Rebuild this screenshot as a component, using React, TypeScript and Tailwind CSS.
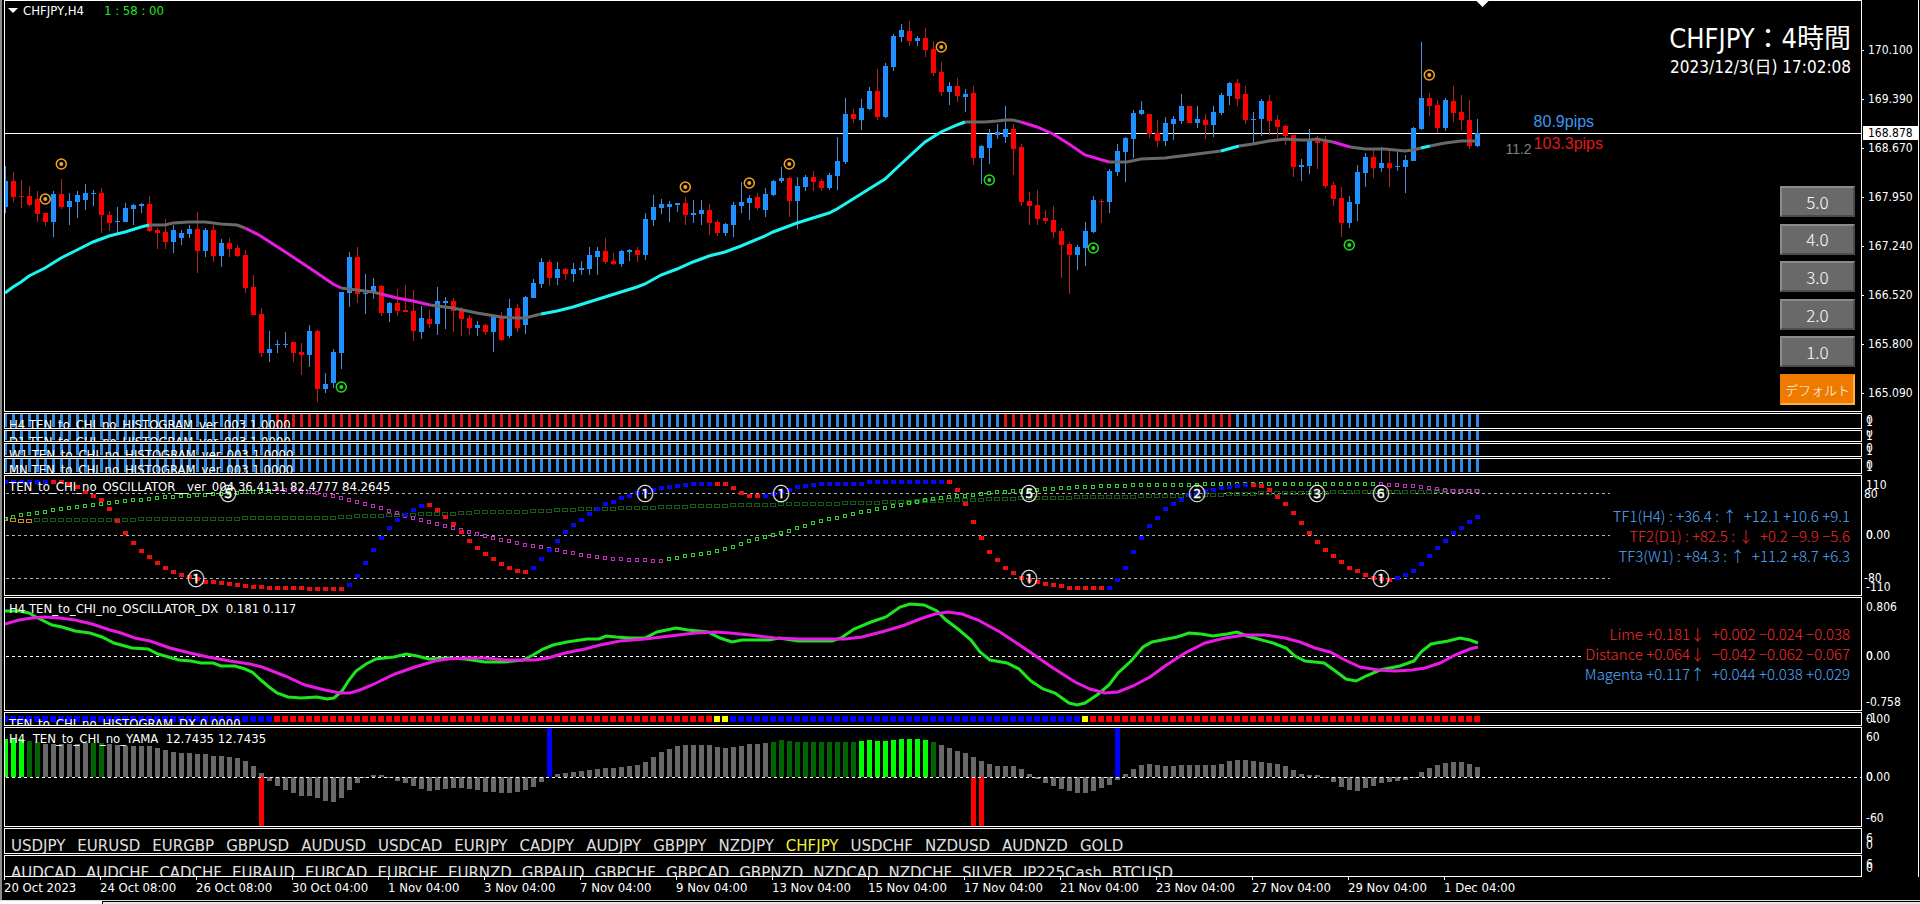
import { useState } from "react";
import type { ReactNode } from "react";

// distance between two bars
const STEP = 8;
const BARS = 185;

const BLUE = "#1e90ff";
const RED = "#ff0000";
const GRAY = "#696969";

// [direction, high, body top, body bottom, low]
type Candle = ["u" | "d", number, number, number, number];

const candles: Candle[] = [
  ["u", 166, 181, 207, 213], ["d", 172, 181, 197, 202], ["d", 180, 196, 197, 208], ["d", 186, 196, 205, 206],
  ["d", 191, 199, 214, 222], ["d", 213, 213, 222, 226], ["u", 191, 194, 222, 237], ["d", 179, 194, 207, 209],
  ["u", 193, 201, 207, 225], ["u", 191, 195, 202, 218], ["u", 184, 193, 200, 210], ["u", 190, 193, 194, 206],
  ["d", 188, 193, 215, 233], ["d", 211, 215, 223, 231], ["u", 207, 221, 222, 233], ["u", 203, 208, 222, 222],
  ["u", 204, 205, 209, 225], ["u", 203, 204, 206, 213], ["d", 196, 204, 231, 232], ["d", 228, 230, 233, 249],
  ["d", 219, 232, 242, 249], ["u", 225, 230, 242, 253], ["u", 230, 233, 238, 245], ["u", 225, 229, 234, 238],
  ["d", 212, 229, 251, 273], ["u", 228, 230, 251, 257], ["d", 225, 230, 256, 262], ["u", 239, 243, 256, 267],
  ["d", 238, 243, 249, 257], ["d", 245, 248, 256, 257], ["d", 250, 255, 288, 293], ["d", 275, 287, 315, 315],
  ["d", 308, 314, 353, 357], ["u", 331, 349, 353, 362], ["u", 340, 344, 345, 353], ["u", 332, 344, 345, 348],
  ["d", 342, 342, 353, 362], ["d", 343, 352, 355, 375], ["u", 325, 331, 355, 367], ["d", 330, 331, 389, 402],
  ["u", 373, 384, 389, 393], ["u", 349, 352, 383, 388], ["u", 292, 292, 353, 369], ["u", 252, 257, 293, 307],
  ["d", 247, 257, 294, 303], ["u", 274, 293, 294, 314], ["u", 278, 286, 292, 299], ["d", 285, 286, 313, 316],
  ["u", 302, 303, 313, 322], ["d", 289, 303, 311, 316], ["d", 285, 310, 312, 312], ["d", 290, 311, 331, 341],
  ["u", 306, 318, 332, 339], ["d", 310, 319, 324, 328], ["u", 287, 301, 324, 335], ["u", 297, 301, 303, 329],
  ["d", 298, 301, 311, 332], ["d", 307, 311, 319, 336], ["d", 315, 318, 328, 335], ["u", 321, 325, 328, 336],
  ["d", 324, 325, 332, 335], ["u", 315, 317, 332, 352], ["d", 312, 318, 340, 341], ["u", 299, 308, 336, 338],
  ["d", 304, 308, 328, 332], ["u", 296, 297, 325, 334], ["u", 279, 283, 298, 298], ["u", 258, 262, 284, 288],
  ["d", 260, 262, 278, 286], ["u", 262, 269, 278, 285], ["d", 268, 269, 274, 280], ["u", 263, 269, 274, 282],
  ["u", 261, 268, 270, 275], ["u", 247, 255, 269, 275], ["u", 247, 251, 257, 275], ["d", 238, 251, 262, 264],
  ["d", 253, 261, 264, 265], ["u", 250, 251, 264, 267], ["u", 249, 250, 252, 261], ["d", 247, 250, 255, 262],
  ["u", 213, 219, 255, 260], ["u", 195, 207, 220, 226], ["u", 199, 204, 208, 214], ["u", 201, 204, 207, 222],
  ["u", 203, 203, 205, 212], ["d", 197, 203, 215, 225], ["u", 200, 213, 215, 223], ["u", 200, 210, 214, 225],
  ["d", 204, 210, 223, 235], ["d", 220, 222, 233, 236], ["u", 223, 224, 233, 236], ["u", 202, 205, 225, 237],
  ["u", 182, 202, 206, 213], ["u", 195, 198, 203, 220], ["d", 193, 197, 208, 210], ["u", 188, 194, 210, 217],
  ["u", 180, 181, 195, 196], ["u", 167, 178, 181, 183], ["d", 177, 178, 201, 217], ["u", 177, 186, 201, 229],
  ["u", 175, 177, 187, 191], ["d", 171, 177, 182, 191], ["d", 179, 181, 188, 191], ["u", 173, 175, 188, 190],
  ["u", 137, 161, 176, 190], ["u", 98, 114, 162, 164], ["d", 109, 114, 119, 123], ["u", 99, 108, 120, 130],
  ["u", 87, 91, 109, 110], ["d", 69, 91, 117, 120], ["u", 63, 66, 117, 118], ["u", 34, 36, 67, 71],
  ["u", 24, 30, 37, 42], ["d", 21, 31, 41, 46], ["u", 36, 38, 41, 46], ["d", 28, 38, 50, 57],
  ["d", 41, 49, 73, 76], ["d", 62, 72, 92, 96], ["u", 82, 86, 92, 105], ["d", 78, 86, 96, 102],
  ["u", 89, 94, 97, 112], ["d", 86, 93, 158, 165], ["u", 145, 146, 158, 184], ["u", 129, 134, 148, 164],
  ["u", 124, 132, 135, 139], ["u", 106, 129, 137, 143], ["d", 124, 129, 149, 175], ["d", 144, 147, 202, 206],
  ["d", 192, 201, 206, 225], ["d", 190, 205, 219, 225], ["d", 210, 218, 221, 224], ["d", 206, 220, 232, 238],
  ["d", 228, 231, 245, 278], ["d", 242, 244, 255, 294], ["u", 245, 247, 255, 270], ["u", 222, 231, 248, 266],
  ["u", 196, 200, 232, 233], ["d", 199, 201, 202, 223], ["u", 169, 171, 202, 213], ["u", 144, 151, 172, 176],
  ["u", 137, 138, 152, 182], ["u", 110, 113, 139, 158], ["u", 101, 110, 114, 115], ["d", 114, 114, 134, 138],
  ["d", 120, 133, 141, 147], ["u", 117, 123, 141, 146], ["u", 116, 119, 124, 140], ["u", 94, 106, 121, 124],
  ["d", 106, 106, 123, 123], ["u", 106, 119, 123, 128], ["d", 114, 120, 125, 139], ["u", 106, 112, 125, 137],
  ["u", 93, 95, 113, 115], ["u", 82, 83, 96, 105], ["d", 79, 83, 99, 106], ["d", 86, 94, 120, 124],
  ["u", 112, 119, 120, 144], ["u", 99, 101, 119, 136], ["d", 95, 101, 121, 135], ["d", 115, 120, 127, 138],
  ["d", 125, 126, 136, 145], ["d", 135, 135, 167, 177], ["u", 159, 165, 167, 181], ["u", 129, 141, 166, 174],
  ["d", 136, 141, 143, 169], ["d", 136, 142, 186, 188], ["d", 182, 185, 199, 206], ["d", 187, 198, 223, 237],
  ["u", 196, 202, 223, 228], ["u", 165, 172, 204, 221], ["u", 153, 157, 173, 187], ["d", 150, 157, 168, 178],
  ["u", 147, 163, 168, 172], ["d", 151, 163, 168, 187], ["u", 152, 166, 167, 171], ["u", 155, 160, 167, 193],
  ["u", 127, 128, 161, 161], ["u", 42, 98, 129, 130], ["d", 93, 98, 106, 116], ["d", 100, 105, 128, 133],
  ["u", 98, 100, 128, 131], ["d", 86, 101, 113, 122], ["d", 95, 112, 120, 130], ["d", 100, 120, 146, 149],
  ["u", 119, 133, 146, 147],
];

const CYAN = "#1cf6f2";
const PINK = "#e81ae4";

const maSegments = [
  { color: CYAN, points: "5,293 13,287 21,282 29,276 45,268 61,258 77,250 93,242 109,236 125,232 141,227 149,225" },
  { color: GRAY, points: "149,225 165,225 173,223 189,222 205,222 221,224 237,225 245,228" },
  { color: PINK, points: "245,228 259,235 273,244 293,257 317,273 333,284 341,288" },
  { color: GRAY, points: "341,288 357,290 373,292 381,294" },
  { color: PINK, points: "381,294 397,298 413,301 430,305" },
  { color: GRAY, points: "430,305 453,308 477,313 501,317 517,318 525,318 541,314" },
  {
    color: CYAN,
    points:
      "541,314 557,311 573,307 589,302 605,297 621,292 637,287 645,284 661,275 677,269 693,262 709,256 725,252 741,246 765,236 773,232 797,223 813,218 829,213 837,209 853,199 877,184 885,179 901,164 925,142 941,132 957,125 965,122",
  },
  { color: GRAY, points: "965,122 985,122 997,121 1005,120 1013,120 1021,122" },
  { color: PINK, points: "1021,122 1037,127 1053,134 1069,144 1085,155 1109,162" },
  { color: GRAY, points: "1109,162 1127,162 1141,159 1165,158 1197,154 1221,151" },
  { color: CYAN, points: "1221,151 1239,146" },
  { color: GRAY, points: "1239,146 1253,144 1269,141 1285,139 1301,140 1309,140 1317,139 1333,142" },
  { color: PINK, points: "1333,142 1350,147" },
  { color: GRAY, points: "1350,147 1365,149 1385,149 1405,151 1413,150 1421,148" },
  { color: CYAN, points: "1421,148 1430,146" },
  { color: GRAY, points: "1430,146 1445,143 1461,141 1477,141" },
];

const signals = [
  { x: 45, y: 199, color: "#f5a31f" },
  { x: 61, y: 164, color: "#f5a31f" },
  { x: 341, y: 387, color: "#22dd22" },
  { x: 685, y: 187, color: "#f5a31f" },
  { x: 749, y: 183, color: "#f5a31f" },
  { x: 789, y: 164, color: "#f5a31f" },
  { x: 941, y: 47, color: "#f5a31f" },
  { x: 989, y: 180, color: "#22dd22" },
  { x: 1093, y: 248, color: "#22dd22" },
  { x: 1349, y: 245, color: "#22dd22" },
  { x: 1429, y: 75, color: "#f5a31f" },
];

const prices = ["170.100", "169.390", "168.670", "167.950", "167.240", "166.520", "165.800", "165.090"];

// short time frame, one value for each bar
const tf1 = [
  482, 482, 482, 482, 482, 482, 482, 482, 484, 487, 492, 496, 500, 509, 521, 533, 543, 551, 557, 563, 568, 572, 575,
  577, 579, 582, 582, 583, 584, 585, 586, 587, 587, 588, 588, 588, 588, 588, 589, 589, 589, 589, 589, 585, 576, 563,
  550, 538, 528, 520, 515, 510, 506, 505, 510, 517, 524, 532, 541, 548, 554, 559, 564, 568, 571, 572, 568, 559, 550,
  541, 532, 525, 520, 514, 509, 504, 502, 498, 496, 493, 492, 490, 488, 487, 486, 485, 484, 484, 484, 484, 484, 488,
  493, 496, 496, 496, 494, 492, 490, 487, 486, 485, 484, 484, 484, 484, 484, 484, 482, 482, 482, 482, 482, 482, 482,
  482, 482, 482, 482, 490, 504, 522, 538, 552, 560, 568, 573, 578, 580, 582, 584, 585, 586, 588, 588, 588, 588, 588,
  588, 580, 568, 552, 538, 526, 518, 509, 504, 500, 495, 493, 491, 490, 488, 487, 486, 485, 485, 486, 490, 497, 504,
  513, 523, 533, 542, 550, 556, 562, 568, 571, 575, 578, 579, 580, 578, 575, 571, 564, 556, 548, 541, 533, 528, 522,
  517,
];
const tf1Falling = [[6, 42], [53, 65], [89, 94], [118, 137], [156, 173]];

// slower time frames are given as [bar, value] and filled in between
const tf2 = [
  [0, 519], [1, 517], [2, 515], [4, 513], [6, 510], [8, 508], [10, 506], [12, 504], [14, 502], [16, 500], [18, 499],
  [20, 497], [22, 496], [24, 495], [26, 494], [28, 493], [30, 492], [33, 491], [34, 489], [36, 490], [38, 492],
  [41, 496], [43, 500], [45, 504], [47, 508], [49, 513], [51, 518], [53, 522], [55, 526], [57, 530], [59, 534],
  [61, 538], [63, 541], [65, 545], [67, 547], [69, 550], [71, 553], [73, 556], [75, 558], [77, 559], [79, 560],
  [82, 561], [83, 559], [85, 556], [87, 554], [89, 551], [91, 547], [93, 541], [95, 537], [97, 533], [99, 528],
  [101, 523], [103, 519], [105, 516], [107, 512], [109, 509], [111, 506], [113, 503], [115, 500], [117, 498],
  [119, 496], [121, 495], [124, 492], [126, 491], [128, 490], [130, 489], [132, 488], [134, 487], [138, 486],
  [142, 485], [148, 485], [150, 484], [172, 484], [174, 485], [176, 486], [178, 488], [180, 490], [182, 491],
  [184, 491],
];
const tf2Falling = [[34, 82], [172, 184]];

const tf3 = [
  [0, 519], [1, 520], [3, 521], [4, 520], [16, 520], [17, 519], [29, 519], [30, 518], [41, 518], [44, 516],
  [50, 515], [52, 514], [55, 514], [59, 512], [64, 512], [70, 510], [72, 509], [80, 508], [87, 506], [100, 504],
  [108, 503], [115, 501], [120, 500], [124, 499], [128, 498], [138, 497], [144, 496], [150, 495], [158, 493],
  [172, 492], [184, 491],
];

const marks = [
  { x: 228, y: 493, text: "⑤" },
  { x: 196, y: 578, text: "①" },
  { x: 645, y: 493, text: "①" },
  { x: 781, y: 493, text: "①" },
  { x: 1029, y: 493, text: "⑤" },
  { x: 1029, y: 578, text: "①" },
  { x: 1197, y: 493, text: "②" },
  { x: 1317, y: 493, text: "③" },
  { x: 1381, y: 493, text: "⑥" },
  { x: 1381, y: 578, text: "①" },
];

const dxLime =
  "5,611 19,611 29,613 36,617 52,625 62,627 75,631 90,633 102,637 114,643 132,648 148,649 158,654 179,660 191,661 201,663 213,663 221,666 235,666 245,669 252,672 262,681 269,687 277,693 288,697 301,698 317,697 327,699 334,698 342,691 349,680 356,671 366,664 376,659 394,657 406,654 417,656 429,659 448,658 465,659 485,662 504,662 523,660 533,655 543,649 553,645 567,642 587,639 599,639 606,636 616,637 630,638 645,638 657,632 676,628 688,630 708,632 720,638 732,642 742,640 769,640 779,638 798,641 832,641 841,638 854,629 871,622 886,617 900,607 910,604 924,605 937,611 946,620 958,629 971,640 980,652 990,660 1007,663 1019,669 1031,681 1043,689 1055,693 1069,703 1077,705 1085,703 1097,695 1109,685 1118,673 1131,661 1143,647 1152,642 1177,637 1189,633 1201,634 1213,636 1227,634 1237,632 1247,636 1273,643 1286,648 1295,656 1305,661 1324,663 1334,670 1346,679 1356,681 1366,676 1380,670 1400,666 1414,661 1421,652 1431,644 1448,641 1460,638 1470,640 1478,643";
const dxPink =
  "5,624 19,620 32,618 45,617 60,618 75,620 92,624 110,630 121,633 135,638 150,641 170,648 190,653 208,657 230,661 250,664 262,667 285,676 305,685 325,690 340,693 350,693 360,690 372,685 395,674 415,667 435,661 448,659 465,658 485,658 505,660 535,660 548,658 565,653 585,649 600,645 620,641 645,639 670,636 695,633 715,632 730,633 750,635 775,638 800,639 845,639 862,637 885,631 905,625 920,619 935,614 948,612 962,614 978,620 1000,632 1030,652 1050,666 1075,682 1090,689 1105,693 1118,692 1133,686 1150,677 1165,666 1185,653 1205,643 1225,638 1245,635 1265,635 1285,638 1300,642 1315,648 1330,652 1345,660 1360,667 1378,670 1395,671 1412,670 1425,668 1440,663 1455,655 1470,649 1478,647";

const yama = [
  739, 739, 739, 741, 742, 744, 744, 744, 744, 744, 743, 743, 743, 744, 745, 746, 746, 746, 746, 748, 750, 752, 753,
  753, 754, 754, 756, 756, 757, 758, 761, 766, 773, 781, 786, 790, 793, 796, 796, 798, 801, 802, 798, 790, 783, 778,
  775, 775, 778, 781, 783, 786, 789, 791, 790, 789, 788, 788, 789, 790, 792, 792, 793, 793, 792, 790, 787, 782, 777,
  774, 773, 772, 771, 770, 769, 768, 768, 767, 766, 765, 762, 757, 752, 749, 746, 745, 745, 745, 745, 747, 748, 747,
  746, 744, 744, 743, 742, 740, 741, 742, 742, 742, 742, 742, 742, 742, 742, 741, 740, 741, 741, 740, 739, 739, 739,
  740, 742, 745, 748, 751, 753, 757, 761, 764, 766, 766, 766, 769, 774, 779, 783, 786, 789, 791, 793, 793, 791, 788,
  785, 780, 774, 769, 765, 764, 765, 766, 766, 765, 765, 765, 765, 765, 764, 761, 760, 760, 761, 762, 763, 764, 766,
  770, 774, 775, 775, 778, 782, 787, 790, 791, 788, 786, 783, 782, 781, 780, 778, 772, 768, 765, 763, 762, 762, 764,
  767,
];
const yamaLime = [[0, 2], [107, 115]];
const yamaGreen = [[3, 4], [11, 12], [96, 106], [116, 116]];
const yamaUp = [68, 139];
const yamaDown = [32, 121, 122];

const symbols = [
  "USDJPY", "EURUSD", "EURGBP", "GBPUSD", "AUDUSD", "USDCAD", "EURJPY", "CADJPY",
  "AUDJPY", "GBPJPY", "NZDJPY", "CHFJPY", "USDCHF", "NZDUSD", "AUDNZD", "GOLD",
];
const moreSymbols = [
  "AUDCAD", "AUDCHF", "CADCHF", "EURAUD", "EURCAD", "EURCHF", "EURNZD", "GBPAUD",
  "GBPCHF", "GBPCAD", "GBPNZD", "NZDCAD", "NZDCHF", "SILVER", "JP225Cash", "BTCUSD",
];

const times = [
  "20 Oct 2023", "24 Oct 08:00", "26 Oct 08:00", "30 Oct 04:00", "1 Nov 04:00", "3 Nov 04:00", "7 Nov 04:00",
  "9 Nov 04:00", "13 Nov 04:00", "15 Nov 04:00", "17 Nov 04:00", "21 Nov 04:00", "23 Nov 04:00", "27 Nov 04:00",
  "29 Nov 04:00", "1 Dec 04:00",
];

const within = (ranges: number[][], i: number) => ranges.some(([from, to]) => i >= from && i <= to);

function fill(points: number[][]) {
  const result: number[] = [];
  for (let k = 0; k < points.length - 1; k++) {
    const [i0, y0] = points[k];
    const [i1, y1] = points[k + 1];
    for (let i = i0; i < i1; i++) {
      result.push(Math.round(y0 + ((y1 - y0) * (i - i0)) / (i1 - i0)));
    }
  }
  result.push(points[points.length - 1][1]);
  return result;
}

const barIndexes = Array.from({ length: BARS }, (_, i) => i);

interface AxisLabel {
  y: number;
  text: string;
  x?: number;
}

interface PanelProps {
  // y of the first pixel row inside the frame, the drawings use chart coordinates
  top: number;
  className: string;
  title?: string;
  labels?: AxisLabel[];
  drawing?: ReactNode;
  children?: ReactNode;
}

const Panel = ({ top, className, title, labels = [], drawing, children }: PanelProps) => {
  return (
    <section className={`flex ${className}`}>
      <div className="relative flex-1 overflow-hidden border border-white">
        {drawing && (
          <svg className="absolute inset-0 h-full w-full" shapeRendering="crispEdges">
            <g transform={`translate(-5 ${-top})`}>{drawing}</g>
          </svg>
        )}
        {title && <h2 className="absolute top-[3px] left-1 text-[13px] leading-4 whitespace-pre">{title}</h2>}
        {children}
      </div>
      <svg className="h-full w-[56px] text-xs" fill="white">
        <g transform={`translate(0 ${1 - top})`}>
          {labels.map((label) => (
            <text key={label.text + label.y} x={label.x ?? 4} y={label.y + 4}>
              {label.text}
            </text>
          ))}
        </g>
      </svg>
    </section>
  );
};

const Level = ({ y, to, color }: { y: number; to: number; color: string }) => (
  <line x1={6} x2={to} y1={y + 0.5} y2={y + 0.5} stroke={color} strokeDasharray="3 3" />
);

const Bars = ({ y, height, red = [] }: { y: number; height: number; red?: number[][] }) => (
  <>
    {barIndexes.map((i) => (
      <rect
        key={i}
        x={4 + i * STEP}
        y={y}
        width={3}
        height={height}
        fill={within(red, i) ? "#dd1414" : "#2e8ce6"}
      />
    ))}
  </>
);

const Candles = () => (
  <>
    {candles.map(([dir, high, top, bottom, low], i) => {
      const x = 5 + i * STEP;
      return (
        <g key={i}>
          <rect x={x} y={high} width={1} height={low - high} fill={dir === "u" ? "#4a8fd6" : "#b52020"} />
          <rect
            x={x - 2}
            y={top}
            width={5}
            height={Math.max(bottom - top, 1)}
            fill={dir === "u" ? BLUE : RED}
          />
        </g>
      );
    })}
  </>
);

const Oscillator = () => {
  const slow = fill(tf3);
  const middle = fill(tf2);
  return (
    <>
      <Level y={493} to={1610} color="#b4b4b4" />
      <Level y={535} to={1610} color="#b4b4b4" />
      <Level y={578} to={1610} color="#b4b4b4" />
      {slow.map((y, i) => (
        <rect
          key={i}
          x={2.5 + i * STEP}
          y={y - 1.5}
          width={5}
          height={3}
          fill="none"
          stroke={i < 4 ? "#d08a1e" : "#165a16"}
        />
      ))}
      {middle.map((y, i) => (
        <rect
          key={i}
          x={3.5 + i * STEP}
          y={y - 1.5}
          width={3}
          height={3}
          fill="none"
          stroke={within(tf2Falling, i) ? "#c22fc2" : "#2fd02f"}
        />
      ))}
      {tf1.map((y, i) => (
        <rect
          key={i}
          x={3 + i * STEP}
          y={y - 2}
          width={5}
          height={4}
          fill={within(tf1Falling, i) ? "#ee1010" : "#0808f0"}
        />
      ))}
      {marks.map((mark) => (
        <text
          key={`${mark.x}-${mark.y}`}
          x={mark.x}
          y={mark.y + 7}
          textAnchor="middle"
          fill="white"
          stroke="white"
          strokeWidth={0.3}
          className="font-['Noto_Sans_CJK_JP',sans-serif] text-[17px]"
        >
          {mark.text}
        </text>
      ))}
    </>
  );
};

const Yama = () => (
  <>
    {yama.map((y, i) => {
      const color = within(yamaLime, i) ? "#00ff00" : within(yamaGreen, i) ? "#006400" : GRAY;
      return (
        <rect key={i} x={3 + i * STEP} y={Math.min(y, 777)} width={5} height={Math.abs(y - 777)} fill={color} />
      );
    })}
    {yamaDown.map((i) => (
      <rect key={i} x={3 + i * STEP} y={777} width={5} height={49} fill={RED} />
    ))}
    {yamaUp.map((i) => (
      <rect key={i} x={3 + i * STEP} y={728} width={5} height={49} fill="#0000ff" />
    ))}
    <Level y={777} to={1861} color="white" />
  </>
);

const Readout = ({ rows }: { rows: { text: string; up: boolean }[] }) => (
  <div className="absolute inset-y-0 right-[11px] flex flex-col justify-center text-right font-['Noto_Sans_CJK_JP',sans-serif] text-[15px] leading-5 font-light whitespace-pre">
    {rows.map((row) => (
      <p key={row.text} className={row.up ? "text-[#55aaff]" : "text-[#f42c2c]"}>
        {row.text}
      </p>
    ))}
  </div>
);

export default function App() {
  const [symbol, setSymbol] = useState("CHFJPY");
  const [scale, setScale] = useState("デフォルト");

  const scales = ["5.0", "4.0", "3.0", "2.0", "1.0", "デフォルト"];

  const symbolRow = (list: string[], gap: string) => (
    <nav className={`flex pt-[7px] pl-1.5 font-['DejaVu_Sans',sans-serif] text-[15px] leading-5 ${gap}`}>
      {list.map((name) => (
        <button
          key={name}
          type="button"
          onClick={() => setSymbol(name)}
          className={name === symbol ? "text-[#f0f03c]" : "text-[#e0e0e0]"}
        >
          {name}
        </button>
      ))}
    </nav>
  );

  return (
    <div className="flex min-h-screen flex-col bg-black font-['DejaVu_Sans_Condensed','Noto_Sans','Noto_Sans_CJK_JP',sans-serif] text-white">
      <main className="flex flex-1 border-l-2 border-[#8c8c8c] pr-px pl-0.5">
        <div className="flex min-w-0 flex-1 flex-col gap-px border-r border-white">
          <section className="flex min-h-[412px] flex-1">
            <div className="relative flex-1 overflow-hidden border border-white">
              <svg className="absolute inset-0 h-full w-full" shapeRendering="crispEdges">
                <line x1={0} x2="100%" y1={132.5} y2={132.5} stroke="white" />
                <g transform="translate(-5 -1)">
                  <Candles />
                  <g fill="none" strokeWidth={3} shapeRendering="auto">
                    {maSegments.map((segment) => (
                      <polyline key={segment.points} points={segment.points} stroke={segment.color} />
                    ))}
                  </g>
                  <g shapeRendering="auto">
                    {signals.map((signal) => (
                      <g key={signal.x}>
                        <circle
                          cx={signal.x + 0.3}
                          cy={signal.y}
                          r={5}
                          fill="none"
                          stroke={signal.color}
                          strokeWidth={1.5}
                        />
                        <circle cx={signal.x + 0.3} cy={signal.y} r={2} fill={signal.color} />
                      </g>
                    ))}
                    <path d="M1476.5 1h12l-6 6z" fill="white" />
                  </g>
                </g>
              </svg>
              <header className="absolute top-0.5 left-0.5 flex items-center text-[13px] leading-4">
                <svg className="mr-1 h-3 w-3" viewBox="0 0 12 12" fill="white">
                  <path d="M1 3h10l-5 5z" />
                </svg>
                <h1>CHFJPY,H4</h1>
                <time className="ml-5 text-[#22e622]">1 : 58 : 00</time>
              </header>
              <div className="absolute top-5 right-2.5 text-right">
                <p className="text-[27px] leading-9">CHFJPY：4時間</p>
                <p className="text-[17px] leading-5">2023/12/3(日) 17:02:08</p>
              </div>
              <div className="absolute top-[110px] right-[258px] flex items-end gap-0.5 font-['Liberation_Sans',sans-serif]">
                <span className="text-sm leading-5 text-[#808080]">11.2</span>
                <div className="mb-1 text-base leading-[22px]">
                  <p className="text-[#3c96ee]">80.9pips</p>
                  <p className="text-[#e01818]">103.3pips</p>
                </div>
              </div>
              <div className="absolute right-1.5 bottom-1.5 flex h-[219px] w-[75px] flex-col justify-between font-['Noto_Sans_CJK_JP',sans-serif] font-light">
                {scales.map((name) => (
                  <button
                    key={name}
                    type="button"
                    onClick={() => setScale(name)}
                    className={`flex h-[31px] items-center justify-center border-2 ${
                      name === scale
                        ? "border-t-[#ee7b00] border-r-[#ffae42] border-b-[#ffae42] border-l-[#ee7b00] bg-[#ee7b00] text-[13px]"
                        : "border-t-[#8a8a8a] border-r-[#4c4c4c] border-b-[#4c4c4c] border-l-[#8a8a8a] bg-[#696969] text-[17px]"
                    }`}
                  >
                    {name}
                  </button>
                ))}
              </div>
            </div>
            <div className="relative flex w-[56px] flex-col gap-[33px] pt-[42px] text-xs">
              {prices.map((price) => (
                <div key={price} className="flex h-4 items-center gap-1">
                  <span className="h-px w-0.5 bg-white" />
                  {price}
                </div>
              ))}
              <span className="absolute top-[126px] right-0 left-px bg-white pl-[5px] leading-[14px] text-black">
                168.878
              </span>
            </div>
          </section>

          <Panel
            top={414}
            className="h-4"
            title="H4 TEN_to_CHI_no_HISTOGRAM_ver_003 1.0000"
            labels={[{ y: 420, text: "0" }, { y: 422, text: "1" }]}
            drawing={<Bars y={414} height={13} red={[[34, 80], [125, 153]]} />}
          />
          <Panel
            top={431}
            className="h-3"
            title="D1 TEN_to_CHI_no_HISTOGRAM_ver_003 1.0000"
            labels={[{ y: 433, text: "0" }, { y: 436, text: "1" }]}
            drawing={<Bars y={431} height={9} />}
          />
          <Panel
            top={444}
            className="h-3.5"
            title="W1 TEN_to_CHI_no_HISTOGRAM_ver_003 1.0000"
            labels={[{ y: 448, text: "0" }, { y: 451, text: "1" }]}
            drawing={<Bars y={444} height={11} />}
          />
          <Panel
            top={459}
            className="h-4"
            title="MN TEN_to_CHI_no_HISTOGRAM_ver_003 1.0000"
            labels={[{ y: 465, text: "0" }, { y: 467, text: "1" }]}
            drawing={<Bars y={459} height={13} />}
          />
          <Panel
            top={476}
            className="h-[121px]"
            title="TEN_to_CHI_no_OSCILLATOR__ver_004 36.4131 82.4777 84.2645"
            labels={[
              { y: 485, text: "110" },
              { y: 494, text: "80", x: 2 },
              { y: 535, text: "0" },
              { y: 535, text: "0.00" },
              { y: 578, text: "-80", x: 2 },
              { y: 587, text: "-110" },
            ]}
            drawing={<Oscillator />}
          >
            <Readout
              rows={[
                { text: "TF1(H4) : +36.4 : ↑  +12.1 +10.6 +9.1", up: true },
                { text: "TF2(D1) : +82.5 : ↓  +0.2 −9.9 −5.6", up: false },
                { text: "TF3(W1) : +84.3 : ↑  +11.2 +8.7 +6.3", up: true },
              ]}
            />
          </Panel>
          <Panel
            top={598}
            className="h-[114px]"
            title="H4 TEN_to_CHI_no_OSCILLATOR_DX  0.181 0.117"
            labels={[
              { y: 607, text: "0.806" },
              { y: 656, text: "0" },
              { y: 656, text: "0.00" },
              { y: 702, text: "-0.758" },
            ]}
            drawing={
              <>
                <Level y={656} to={1584} color="white" />
                <g fill="none" strokeWidth={3} shapeRendering="auto">
                  <polyline points={dxLime} stroke="#1ee61e" />
                  <polyline points={dxPink} stroke={PINK} />
                </g>
              </>
            }
          >
            <Readout
              rows={[
                { text: "Lime +0.181↓  +0.002 −0.024 −0.038", up: false },
                { text: "Distance +0.064↓  −0.042 −0.062 −0.067", up: false },
                { text: "Magenta +0.117↑  +0.044 +0.038 +0.029", up: true },
              ]}
            />
          </Panel>
          <Panel
            top={713}
            className="h-3.5"
            title="TEN_to_CHI_no_HISTOGRAM_DX 0.0000"
            labels={[{ y: 719, text: "0.00" }, { y: 718, text: "-1" }]}
            drawing={barIndexes.map((i) => (
              <rect
                key={i}
                x={2 + i * STEP}
                y={716}
                width={6}
                height={6}
                fill={i === 89 || i === 90 || i === 135 ? "#ffff00" : i < 34 || (i > 90 && i < 135) ? "#0000ff" : RED}
              />
            ))}
          />
          <Panel
            top={728}
            className="h-[100px]"
            title="H4  TEN_to_CHI_no_YAMA  12.7435 12.7435"
            labels={[
              { y: 737, text: "60" },
              { y: 777, text: "0" },
              { y: 777, text: "0.00" },
              { y: 818, text: "-60" },
            ]}
            drawing={<Yama />}
          />
          <Panel top={829} className="h-[26px]" labels={[{ y: 838, text: "6" }, { y: 845, text: "0" }]}>
            {symbolRow(symbols, "gap-3")}
          </Panel>
          <Panel top={856} className="h-[22px]" labels={[{ y: 864, text: "6" }, { y: 868, text: "0" }]}>
            {symbolRow(moreSymbols, "gap-2.5")}
          </Panel>
        </div>
      </main>
      <footer className="flex h-[23px] overflow-hidden border-l-2 border-[#8c8c8c] pl-0.5 text-[13px] leading-4">
        {times.map((time) => (
          <span key={time} className="w-24 shrink-0 whitespace-nowrap">
            <span className="block h-[3px] w-px bg-white" />
            {time}
          </span>
        ))}
      </footer>
      <div className="flex h-1 border-t border-[#d8d8d8]">
        <span className="w-[102px] bg-white" />
        <span className="flex-1 border-t border-l border-black bg-[#e8e8e8]" />
      </div>
    </div>
  );
}
